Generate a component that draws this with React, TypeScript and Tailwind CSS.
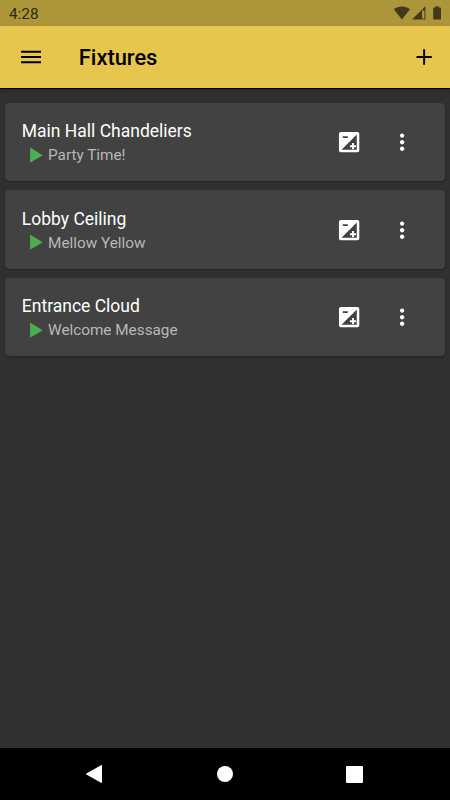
import { ReactNode } from 'react'

interface Fixture {
  id: number
  name: string
  scene: string
}

const fixtures: Fixture[] = [
  { id: 1, name: 'Main Hall Chandeliers', scene: 'Party Time!' },
  { id: 2, name: 'Lobby Ceiling', scene: 'Mellow Yellow' },
  { id: 3, name: 'Entrance Cloud', scene: 'Welcome Message' },
]

function Icon({ children, className = '' }: { children: ReactNode; className?: string }) {
  return (
    <svg viewBox="0 0 24 24" fill="currentColor" className={`w-[26.25px] h-[26.25px] shrink-0 ${className}`}>
      {children}
    </svg>
  )
}

function StatusBar() {
  return (
    <div className="h-[26.25px] shrink-0 bg-[#ad953a] flex items-center justify-between pl-[9px] pr-[8px] text-[#41391a]">
      <span className="text-[15.3px] leading-none pt-[3px] text-[#2f2a10]">4:28</span>
      <svg viewBox="0 0 49 16" fill="currentColor" className="w-[49px] h-4">
        <path d="M.8 4.2C5.5.6 12.3.6 17 4.2L8.9 14.4z" />
        <path d="M32.4 1.2v13.3H19zM31.4 5.5h-2.4v8h2.4z" fillRule="evenodd" />
        <path d="M42.5 1.2h3.2v1.2h1.1c.7 0 1.2.5 1.2 1.2v9.8c0 .6-.5 1.1-1.1 1.1h-5.6c-.6 0-1.1-.5-1.1-1.1V3.6c0-.7.5-1.2 1.2-1.2h1.1z" />
      </svg>
    </div>
  )
}

function AppBar() {
  return (
    <header className="relative h-[61.25px] shrink-0 bg-[#e6c64d] text-black flex items-center pl-[17.5px] pr-[12.75px] shadow-[0_2px_4px_rgba(0,0,0,0.35),0_1px_0_#05082a]">
      <button>
        <Icon>
          <path d="M2.8 17.6h18.2v-1.8H2.8zM2.8 12.8h18.2v-1.8H2.8zM2.8 6.1v1.8h18.2V6.1z" />
        </Icon>
      </button>
      <h1 className="ml-[35px] pt-[2px] text-[21.9px] leading-none font-medium">Fixtures</h1>
      <button className="ml-auto">
        <Icon>
          <path d="M19 12.8h-6.1v6.1h-1.8v-6.1H5V11h6.1V4.9h1.8V11H19z" />
        </Icon>
      </button>
    </header>
  )
}

function FixtureCard({ fixture }: { fixture: Fixture }) {
  return (
    <li className="h-[78.75px] flex items-center rounded-[4.4px] bg-[#424242] pl-[17px] pr-[30px] shadow-[0_1px_2px_rgba(0,0,0,0.3)]">
      <div className="flex-1 min-w-0 pt-[2px]">
        <p className="text-[17.5px] leading-[24px] text-white">{fixture.name}</p>
        <div className="flex items-center h-[24px]">
          <Icon className="text-[#4caf50]">
            <path d="M7.4 5v14L18.9 12z" />
          </Icon>
          <p className="text-[15.3px] leading-[24px] text-[#b8b8b8]">{fixture.scene}</p>
        </div>
      </div>
      <div className="flex gap-[26.25px] pt-[0.7px] text-white">
        <button>
          <Icon>
            <path
              fillRule="evenodd"
              d="M4.5 2.7h15c1 0 1.8.8 1.8 1.8v15c0 1-.8 1.8-1.8 1.8h-15c-1 0-1.8-.8-1.8-1.8v-15c0-1 .8-1.8 1.8-1.8zM19 5 5 19h14zM6.2 6.7v1.6h4.6V6.7z"
            />
            <path d="M14.7 12.9h1.7v2h2v1.7h-2v2h-1.7v-2h-2v-1.7h2z" />
          </Icon>
        </button>
        <button>
          <Icon>
            <path d="M12 8c1.1 0 2-.9 2-2s-.9-2-2-2-2 .9-2 2 .9 2 2 2zm0 2c-1.1 0-2 .9-2 2s.9 2 2 2 2-.9 2-2-.9-2-2-2zm0 6c-1.1 0-2 .9-2 2s.9 2 2 2 2-.9 2-2-.9-2-2-2z" />
          </Icon>
        </button>
      </div>
    </li>
  )
}

function NavBar() {
  return (
    <nav className="h-[52px] shrink-0 bg-black text-white flex items-center justify-between pl-[85px] pr-[87px]">
      <svg viewBox="0 0 18 20" fill="currentColor" className="w-[18px] h-5">
        <path d="M16 1.2c.5-.3 1 0 1 .5v16.6c0 .5-.5.8-1 .5L1.4 10.5c-.4-.3-.4-.8 0-1z" />
      </svg>
      <span className="w-4 h-4 rounded-full bg-white" />
      <span className="w-[17px] h-[17px] rounded-[1px] bg-white" />
    </nav>
  )
}

export default function App() {
  return (
    <div className="w-[450px] h-[800px] flex flex-col overflow-hidden bg-[#303030] font-[Roboto,sans-serif]">
      <StatusBar />
      <AppBar />
      <ul className="flex-1 flex flex-col gap-[8.75px] px-[4.8px] pt-[15.2px]">
        {fixtures.map((fixture) => (
          <FixtureCard key={fixture.id} fixture={fixture} />
        ))}
      </ul>
      <NavBar />
    </div>
  )
}
